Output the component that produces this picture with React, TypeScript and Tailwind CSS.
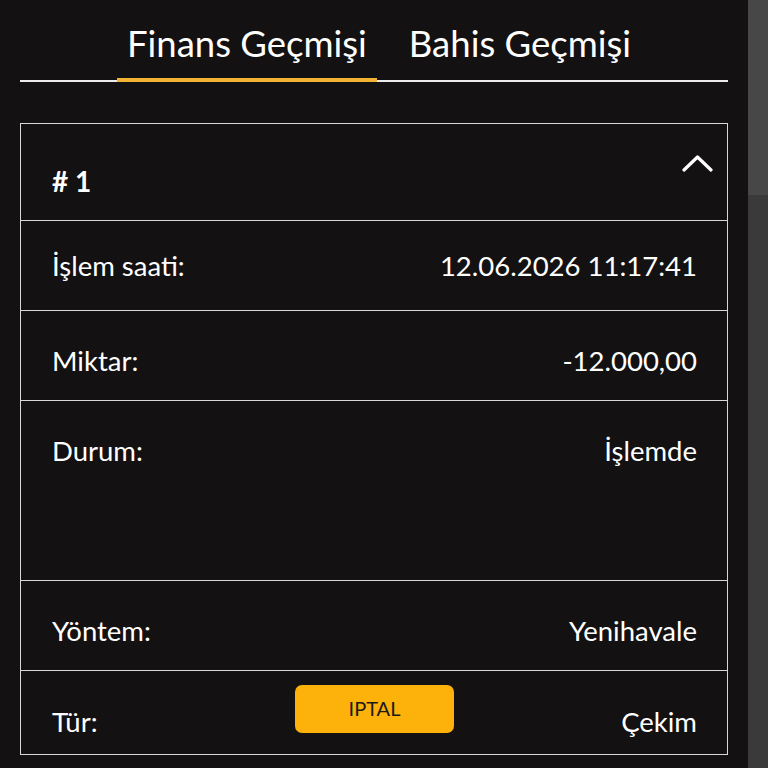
const rows = [
  { label: "İşlem saati:", value: "12.06.2026 11:17:41", pt: "pt-[0px]" },
  { label: "Miktar:", value: "-12.000,00", pt: "pt-[10px]" },
];

function Chevron() {
  return (
    <svg width="31" height="18" viewBox="0 0 31 18" fill="none" className="mt-[30px] -mr-[16px]">
      <polyline
        points="2,16 15.5,3 29,16"
        stroke="white"
        strokeWidth="3.2"
        strokeLinecap="round"
        strokeLinejoin="round"
      />
    </svg>
  );
}

export default function App() {
  return (
    <div
      className="flex h-[768px] w-[768px] overflow-hidden bg-[#131111] text-white"
      style={{ fontFamily: "Lato, 'Noto Sans', sans-serif" }}
    >
      <div className="w-[748px] shrink-0 px-5">
        {/* tabs */}
        <div className="flex justify-center gap-[22px] border-b-2 border-[#ececec] pl-[10px] pt-[20px]">
          <div className="relative px-[10px] pb-[14px] text-[36.5px] leading-[46px]">
            Finans Geçmişi
            <div className="absolute -bottom-[2px] left-0 right-0 h-[4px] bg-[#f2b233]" />
          </div>
          <div className="px-[10px] pb-[14px] text-[36.5px] leading-[46px]">Bahis Geçmişi</div>
        </div>

        {/* card */}
        <div className="mt-[41px] border border-[#d8d8d8]">
          <div className="flex h-[97px] items-start justify-between border-b border-[#d8d8d8] pl-[31px] pr-[30px]">
            <div className="pt-[40px] text-[28px] font-bold leading-[34px]">#&nbsp;1</div>
            <Chevron />
          </div>

          {rows.map((r) => (
            <div
              key={r.label}
              className={`flex h-[90px] items-center justify-between border-b border-[#d8d8d8] pl-[31px] pr-[30px] text-[27.5px] leading-[34px] ${r.pt}`}
            >
              <span>{r.label}</span>
              <span>{r.value}</span>
            </div>
          ))}

          <div className="flex h-[180px] items-start justify-between border-b border-[#d8d8d8] pl-[31px] pr-[30px] pt-[33px] text-[27.5px] leading-[34px]">
            <span>Durum:</span>
            <span>İşlemde</span>
          </div>

          <div className="flex h-[90px] items-center justify-between border-b border-[#d8d8d8] pl-[31px] pr-[30px] pt-[10px] text-[27.5px] leading-[34px]">
            <span>Yöntem:</span>
            <span>Yenihavale</span>
          </div>

          <div className="flex h-[83px] items-start pl-[31px] pr-[30px] text-[27.5px] leading-[34px]">
            <span className="flex-1 pt-[34px]">Tür:</span>
            <button className="mt-[14px] h-[48px] w-[159px] rounded-[7px] bg-[#fdb10b] pb-[3px] text-[20px] leading-[24px] text-[#1a1a1a]">
              IPTAL
            </button>
            <span className="flex-1 pt-[34px] text-right">Çekim</span>
          </div>
        </div>
      </div>

      {/* scrollbar */}
      <div className="flex w-[20px] flex-col bg-[#3a3a3a]">
        <div className="h-[195px] bg-[#474747]" />
      </div>
    </div>
  );
}
